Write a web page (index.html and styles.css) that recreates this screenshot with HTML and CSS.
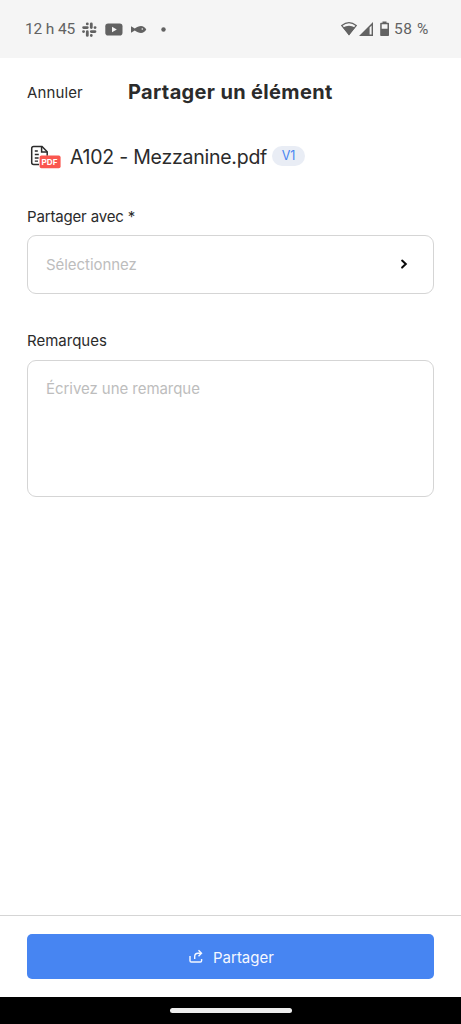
FILE: index.html
```html
<!DOCTYPE html>
<html lang="fr">
<head>
<meta charset="utf-8">
<title>Partager un élément</title>
<link rel="stylesheet" href="styles.css">
</head>
<body>
<div class="screen">
  <div class="status">
    <span class="clock">12 h 45</span>
    <svg class="apps" width="86" height="18" viewBox="81 20 86 18" fill="#626262">
      <g stroke="#626262" stroke-width="2.8" stroke-linecap="round" fill="none">
        <path d="M87.300 23.800v.1M91.300 23.800v3.700M83.600 27.600h3.700M95 27.600h.1M83.500 31.600h.1M87.300 31.700v3.700M91.300 31.600h3.700M91.300 35.400v.1"/>
      </g>
      <rect x="105.300" y="23.400" width="17.200" height="12.200" rx="2.800"/>
      <path d="M112 26.700l4.800 2.800-4.800 2.800z" fill="#f5f5f5"/>
      <path d="M131 26.300l3.800 2.300c2-1.600 4.100-2.500 6.200-2.500 2.200 0 4 1.400 5.300 3.400-1.300 2-3.100 3.400-5.300 3.400-2.100 0-4.200-.9-6.200-2.500l-3.800 2.300z"/>
      <circle cx="142.300" cy="29" r=".8" fill="#f5f5f5"/>
      <circle cx="163.500" cy="29.500" r="2.200"/>
    </svg>
    <svg class="signals" width="50" height="18" viewBox="340 20 50 18" fill="#626262">
      <path d="M341.800 25.600q7.200-5.800 14.400 0L349 34.300z" fill="none" stroke="#626262" stroke-width="1.300"/>
      <path d="M343 27.400q6-3.400 12 0L349 35.600z"/>
      <path fill-rule="evenodd" d="M359 36l14-14v14zM369.600 27.400v7.200h2v-9.200z"/>
      <path fill-rule="evenodd" d="M382.500 21.400h4v1.300h1.700q.8 0 .8.800v11.700q0 .8-.8.800h-7.200q-.8 0-.8-.8V23.500q0-.8.800-.8h1.500zM381.700 24.200v4.600h5.800v-4.600z"/>
    </svg>
    <span class="percent">58 %</span>
  </div>
  <header class="header">
    <span class="cancel">Annuler</span>
    <h1 class="title">Partager un élément</h1>
  </header>
  <main class="content">
    <div class="file">
      <svg class="file-icon" width="32" height="26" viewBox="30 144 32 26">
        <path d="M39 164.500h-5.300q-2 0-2-2v-14q0-2 2-2h8.300l5.200 5.200v4" fill="none" stroke="#2b2b2b" stroke-width="1.500"/>
        <path d="M41.600 146.500v5.500h5.500" fill="none" stroke="#2b2b2b" stroke-width="1.500"/>
        <path d="M34.800 151h3M34.800 154.500h4M34.800 158h3.800M34.800 161.200h3.200" stroke="#2b2b2b" stroke-width="1.300"/>
        <rect x="39.600" y="155.600" width="21" height="12.700" rx="1.800" fill="#fa564f"/>
        <text class="pdf" x="41.600" y="165" textLength="15.800" lengthAdjust="spacingAndGlyphs">PDF</text>
      </svg>
      <span class="file-name">A102 - Mezzanine.pdf</span>
      <span class="version">V1</span>
    </div>
    <label class="label"><span class="label-share">Partager avec *</span></label>
    <div class="field select">
      <span class="select-text">Sélectionnez</span>
      <svg width="10" height="12" viewBox="399 258 10 12"><path d="M402.100 259.600l3.700 3.500-3.700 3.500" fill="none" stroke="#080808" stroke-width="2" stroke-linecap="round"/></svg>
    </div>
    <label class="label notes-label"><span class="label-notes">Remarques</span></label>
    <div class="field notes"><span class="notes-text">Écrivez une remarque</span></div>
  </main>
  <footer class="footer">
    <div class="button">
      <svg width="15" height="15" viewBox="188 949 15 15" fill="none" stroke="#f5f8ff" stroke-width="1.400"><path d="M190 956v4.700q0 1.300 1.300 1.300h9q1.300 0 1.300-1.300v-1.700"/><path d="M194.700 959v-2.400q0-3.300 3.300-3.300h3"/><path d="M198.500 950.300l3 3-3 3"/></svg>
      <span class="button-text">Partager</span>
    </div>
  </footer>
  <div class="navbar"><div class="handle"></div></div>
</div>
</body>
</html>
```
FILE: styles.css
```css
* { box-sizing: border-box; }
body { margin: 0; font-family: Inter, "Liberation Sans", sans-serif; color: #2b2b2b; background: #fff; }
span, h1 { white-space: nowrap; }
svg { display: block; flex: none; }
.screen { display: flex; flex-direction: column; width: 461px; height: 1024px; }
.status { height: 58px; display: flex; align-items: center; padding: 0 32px 0 25px; background: #f5f5f5; color: #626262; font-family: Roboto, sans-serif; font-size: 15.5px; }
.clock { width: 56px; letter-spacing: -.15px; }
.signals { margin-left: auto; }
.percent { margin-left: 4px; width: 35px; letter-spacing: .6px; }
.header { height: 68px; display: flex; align-items: center; padding-left: 27px; }
.cancel { width: 101px; font-size: 15px; letter-spacing: .13px; }
.title { margin: 0; font-size: 20px; font-weight: 700; letter-spacing: .34px; }
.content { flex: 1; padding: 18px 27px 0; }
.file { height: 26px; display: flex; align-items: center; padding-left: 3px; }
.file-name { margin-left: 8px; width: 202px; font-size: 19.5px; letter-spacing: -.24px; }
.pdf { font: 700 8px Inter, sans-serif; fill: #fff; }
.version { width: 33px; height: 20px; margin-top: -2px; border-radius: 10px; background: #e9edf5; color: #4785f2; font-size: 12.5px; line-height: 20px; text-align: center; }
.label { display: flex; align-items: center; height: 20px; margin-top: 36px; font-size: 15px; }
.label-share { letter-spacing: -.16px; }
.field { border: 1px solid #d5d5d5; border-radius: 9px; margin-top: 9px; color: #bdbdbd; font-size: 15px; }
.select { height: 59px; display: flex; align-items: center; justify-content: space-between; padding: 0 24px 0 18px; }
.select-text, .notes-text { letter-spacing: -.05px; }
.notes-label { margin-top: 36px; }
.notes { height: 137px; margin-top: 10px; padding: 18px; line-height: 20px; }
.footer { height: 82px; border-top: 1px solid #d5d5d5; padding: 18px 27px; }
.button { height: 45px; border-radius: 5px; background: #4785f2; color: #f5f8ff; display: flex; align-items: center; padding-left: 161px; font-size: 15px; }
.button-text { margin-left: 10px; padding-top: 1px; }
.navbar { height: 27px; background: #000; display: flex; align-items: center; justify-content: center; }
.handle { width: 122px; height: 5px; border-radius: 3px; background: #eee; }
```
